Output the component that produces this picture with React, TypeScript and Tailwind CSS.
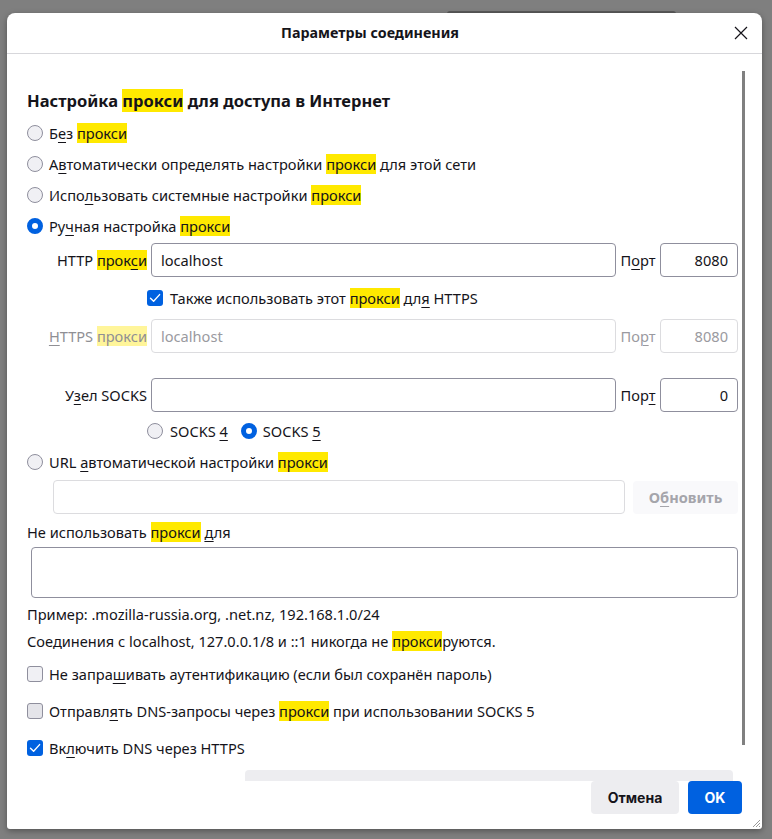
import React from "react";

const Hl = ({ children, dim }: { children: React.ReactNode; dim?: boolean }) => (
  <span className={dim ? "bg-[#fff59a]" : "bg-[#ffe900]"}>{children}</span>
);
const U = ({ children }: { children: React.ReactNode }) => (
  <span className="underline decoration-1 underline-offset-[3px]">{children}</span>
);

const Radio = ({ checked }: { checked?: boolean }) =>
  checked ? (
    <div className="w-4 h-4 shrink-0 rounded-full border-[5px] border-[#0061e0] bg-white" />
  ) : (
    <div className="w-4 h-4 shrink-0 rounded-full border border-[#8f8f9d] bg-[#f0f0f4]" />
  );

const Check = ({ checked, dark }: { checked?: boolean; dark?: boolean }) =>
  checked ? (
    <div className="w-4 h-4 shrink-0 rounded-[3px] bg-[#0061e0] flex items-center justify-center">
      <svg width="12" height="12" viewBox="0 0 12 12" fill="none">
        <path d="M1.5 6.2 L4.6 9.2 L10.6 2.6" stroke="white" strokeWidth="1.4" strokeLinecap="round" strokeLinejoin="round" />
      </svg>
    </div>
  ) : (
    <div className={`w-4 h-4 shrink-0 rounded-[3px] border border-[#8f8f9d] ${dark ? "bg-[#e4e4e9]" : "bg-[#f0f0f4]"}`} />
  );

const Input = ({ value, disabled, className, right }: { value?: string; disabled?: boolean; className: string; right?: boolean }) => (
  <div
    className={`h-[34px] rounded-[4px] border flex items-center ${right ? "justify-end pr-[9px]" : "pl-[9px]"} ${
      disabled ? "border-[#dcdcdf] text-[#9a9aa0]" : "border-[#8f8f9d] text-[#15141a]"
    } ${className}`}
  >
    {value}
  </div>
);

export default function App() {
  return (
    <div
      className="relative w-[772px] h-[839px] bg-[#7f7f7f] pt-[13px] pl-[7px] text-[14.6px] leading-[20px] text-[#15141a]"
      style={{ fontFamily: '"Noto Sans", "Open Sans", sans-serif' }}
    >
      <div className="absolute left-[447px] top-[11px] w-[229px] h-[8px] rounded-t-[3px] border-t-2 border-x border-[#5a5a5a] bg-[#7a7a7a]" />
      <div className="relative w-[755px] h-[816px] bg-white rounded-t-[8px] rounded-b-[3px] shadow-[0_2px_6px_rgba(0,0,0,0.35)] flex flex-col">
        {/* header */}
        <div className="h-[41px] shrink-0 border-b border-[#d7d7db] flex items-center">
          <div className="flex-1 text-center font-bold text-[14.3px]">Параметры соединения</div>
          <div className="w-[29px] shrink-0 flex items-center pl-[1px]">
            <svg width="14" height="14" viewBox="0 0 14 14" fill="none">
              <path d="M1 1 L13 13 M13 1 L1 13" stroke="#15141a" strokeWidth="1.2" />
            </svg>
          </div>
        </div>

        {/* content */}
        <div className="flex-1 pl-[20px] pt-[31px] w-[731px]">
          <div className="h-[32px] flex items-center text-[16.5px] font-bold">
            <span>
              Настройка <Hl>прокси</Hl> для доступа в Интернет
            </span>
          </div>
          <div className="h-[31px] flex items-center gap-[6px]">
            <Radio />
            <span>
              Б<U>е</U>з <Hl>прокси</Hl>
            </span>
          </div>
          <div className="h-[31px] flex items-center gap-[6px]">
            <Radio />
            <span>
              А<U>в</U>томатически определять настройки <Hl>прокси</Hl> для этой сети
            </span>
          </div>
          <div className="h-[31px] flex items-center gap-[6px]">
            <Radio />
            <span>
              Испо<U>л</U>ьзовать системные настройки <Hl>прокси</Hl>
            </span>
          </div>
          <div className="h-[31px] flex items-center gap-[6px]">
            <Radio checked />
            <span>
              Ру<U>ч</U>ная настройка <Hl>прокси</Hl>
            </span>
          </div>

          {/* HTTP */}
          <div className="mt-[2px] flex items-center">
            <div className="w-[120px] text-right">
              HTTP <Hl>прок<U>с</U>и</Hl>
            </div>
            <Input value="localhost" className="ml-[4px] w-[465px]" />
            <div className="w-[44px] text-center">
              П<U>о</U>рт
            </div>
            <Input value="8080" right className="w-[78px]" />
          </div>
          <div className="h-[42px] flex items-center pl-[120px] gap-[7px]">
            <Check checked />
            <span>
              Также использовать этот <Hl>прокси</Hl> дл<U>я</U> HTTPS
            </span>
          </div>
          <div className="flex items-center text-[#8f8f94]">
            <div className="w-[120px] text-right">
              <U>H</U>TTPS <Hl dim>прокси</Hl>
            </div>
            <Input value="localhost" disabled className="ml-[4px] w-[465px]" />
            <div className="w-[44px] text-center text-[#9a9aa0]">
              По<U>р</U>т
            </div>
            <Input value="8080" disabled right className="w-[78px]" />
          </div>
          <div className="mt-[25px] flex items-center">
            <div className="w-[120px] text-right">
              У<U>з</U>ел SOCKS
            </div>
            <Input className="ml-[4px] w-[465px]" />
            <div className="w-[44px] text-center">
              Пор<U>т</U>
            </div>
            <Input value="0" right className="w-[78px]" />
          </div>
          <div className="h-[38px] flex items-center pl-[120px]">
            <Radio />
            <span className="ml-[7px]">
              SOCKS <U>4</U>
            </span>
            <span className="ml-[13px]">
              <Radio checked />
            </span>
            <span className="ml-[6px]">
              SOCKS <U>5</U>
            </span>
          </div>
          <div className="h-[24px] flex items-center gap-[6px]">
            <Radio />
            <span>
              URL <U>а</U>втоматической настройки <Hl>прокси</Hl>
            </span>
          </div>
          <div className="mt-[6px] flex items-center">
            <Input disabled className="ml-[26px] w-[572px]" />
            <div className="ml-[8px] w-[105px] h-[33px] rounded-[4px] bg-[#f9f9fb] flex items-center justify-center font-bold text-[#a5a5ab]">
              <span>
                О<U>б</U>новить
              </span>
            </div>
          </div>
          <div className="mt-[8px] h-[20px] flex items-center">
            <span>
              Не использовать <Hl>прокси</Hl> <U>д</U>ля
            </span>
          </div>
          <div className="mt-[5px] ml-[4px] w-[707px] h-[51px] rounded-[4px] border border-[#8f8f9d]" />
          <div className="mt-[6px] h-[20px]">Пример: .mozilla-russia.org, .net.nz, 192.168.1.0/24</div>
          <div className="mt-[7px] h-[20px]">
            Соединения с localhost, 127.0.0.1/8 и ::1 никогда не <Hl>прокси</Hl>руются.
          </div>
          <div className="mt-[13px] h-[20px] flex items-center gap-[6px]">
            <Check />
            <span>
              Не запра<U>ш</U>ивать аутентификацию (если был сохранён пароль)
            </span>
          </div>
          <div className="mt-[17px] h-[20px] flex items-center gap-[6px]">
            <Check dark />
            <span>
              Отправл<U>я</U>ть DNS-запросы через <Hl>прокси</Hl> при использовании SOCKS 5
            </span>
          </div>
          <div className="mt-[17px] h-[20px] flex items-center gap-[6px]">
            <Check checked />
            <span>
              Вк<U>л</U>ючить DNS через HTTPS
            </span>
          </div>
        </div>

        {/* bottom */}
        <div className="ml-[238px] w-[488px] h-[11px] shrink-0 rounded-t-[4px] bg-[#ededf0]" />
        <div className="h-[33px] shrink-0 flex justify-end pr-[20px] gap-[9px] text-[14px]" style={{ fontFamily: 'Inter, "Noto Sans", sans-serif' }}>
          <div className="w-[88px] h-[33px] rounded-[4px] bg-[#ededf0] flex items-center justify-center font-bold">Отмена</div>
          <div className="w-[54px] h-[33px] rounded-[4px] bg-[#0061e0] text-white flex items-center justify-center font-bold">OK</div>
        </div>
        <div className="h-[15px] shrink-0" />

        {/* overlay scrollbar */}
        <div className="absolute left-[735px] top-[58px] w-[3px] h-[674px] bg-[#808080]" />
        {/* resize grip */}
        <svg className="absolute right-[1px] bottom-[1px]" width="10" height="10" viewBox="0 0 10 10">
          <path d="M9 2 L2 9 M9 5 L5 9 M9 8 L8 9" stroke="#9a9a9a" strokeWidth="1" />
        </svg>
      </div>
    </div>
  );
}
